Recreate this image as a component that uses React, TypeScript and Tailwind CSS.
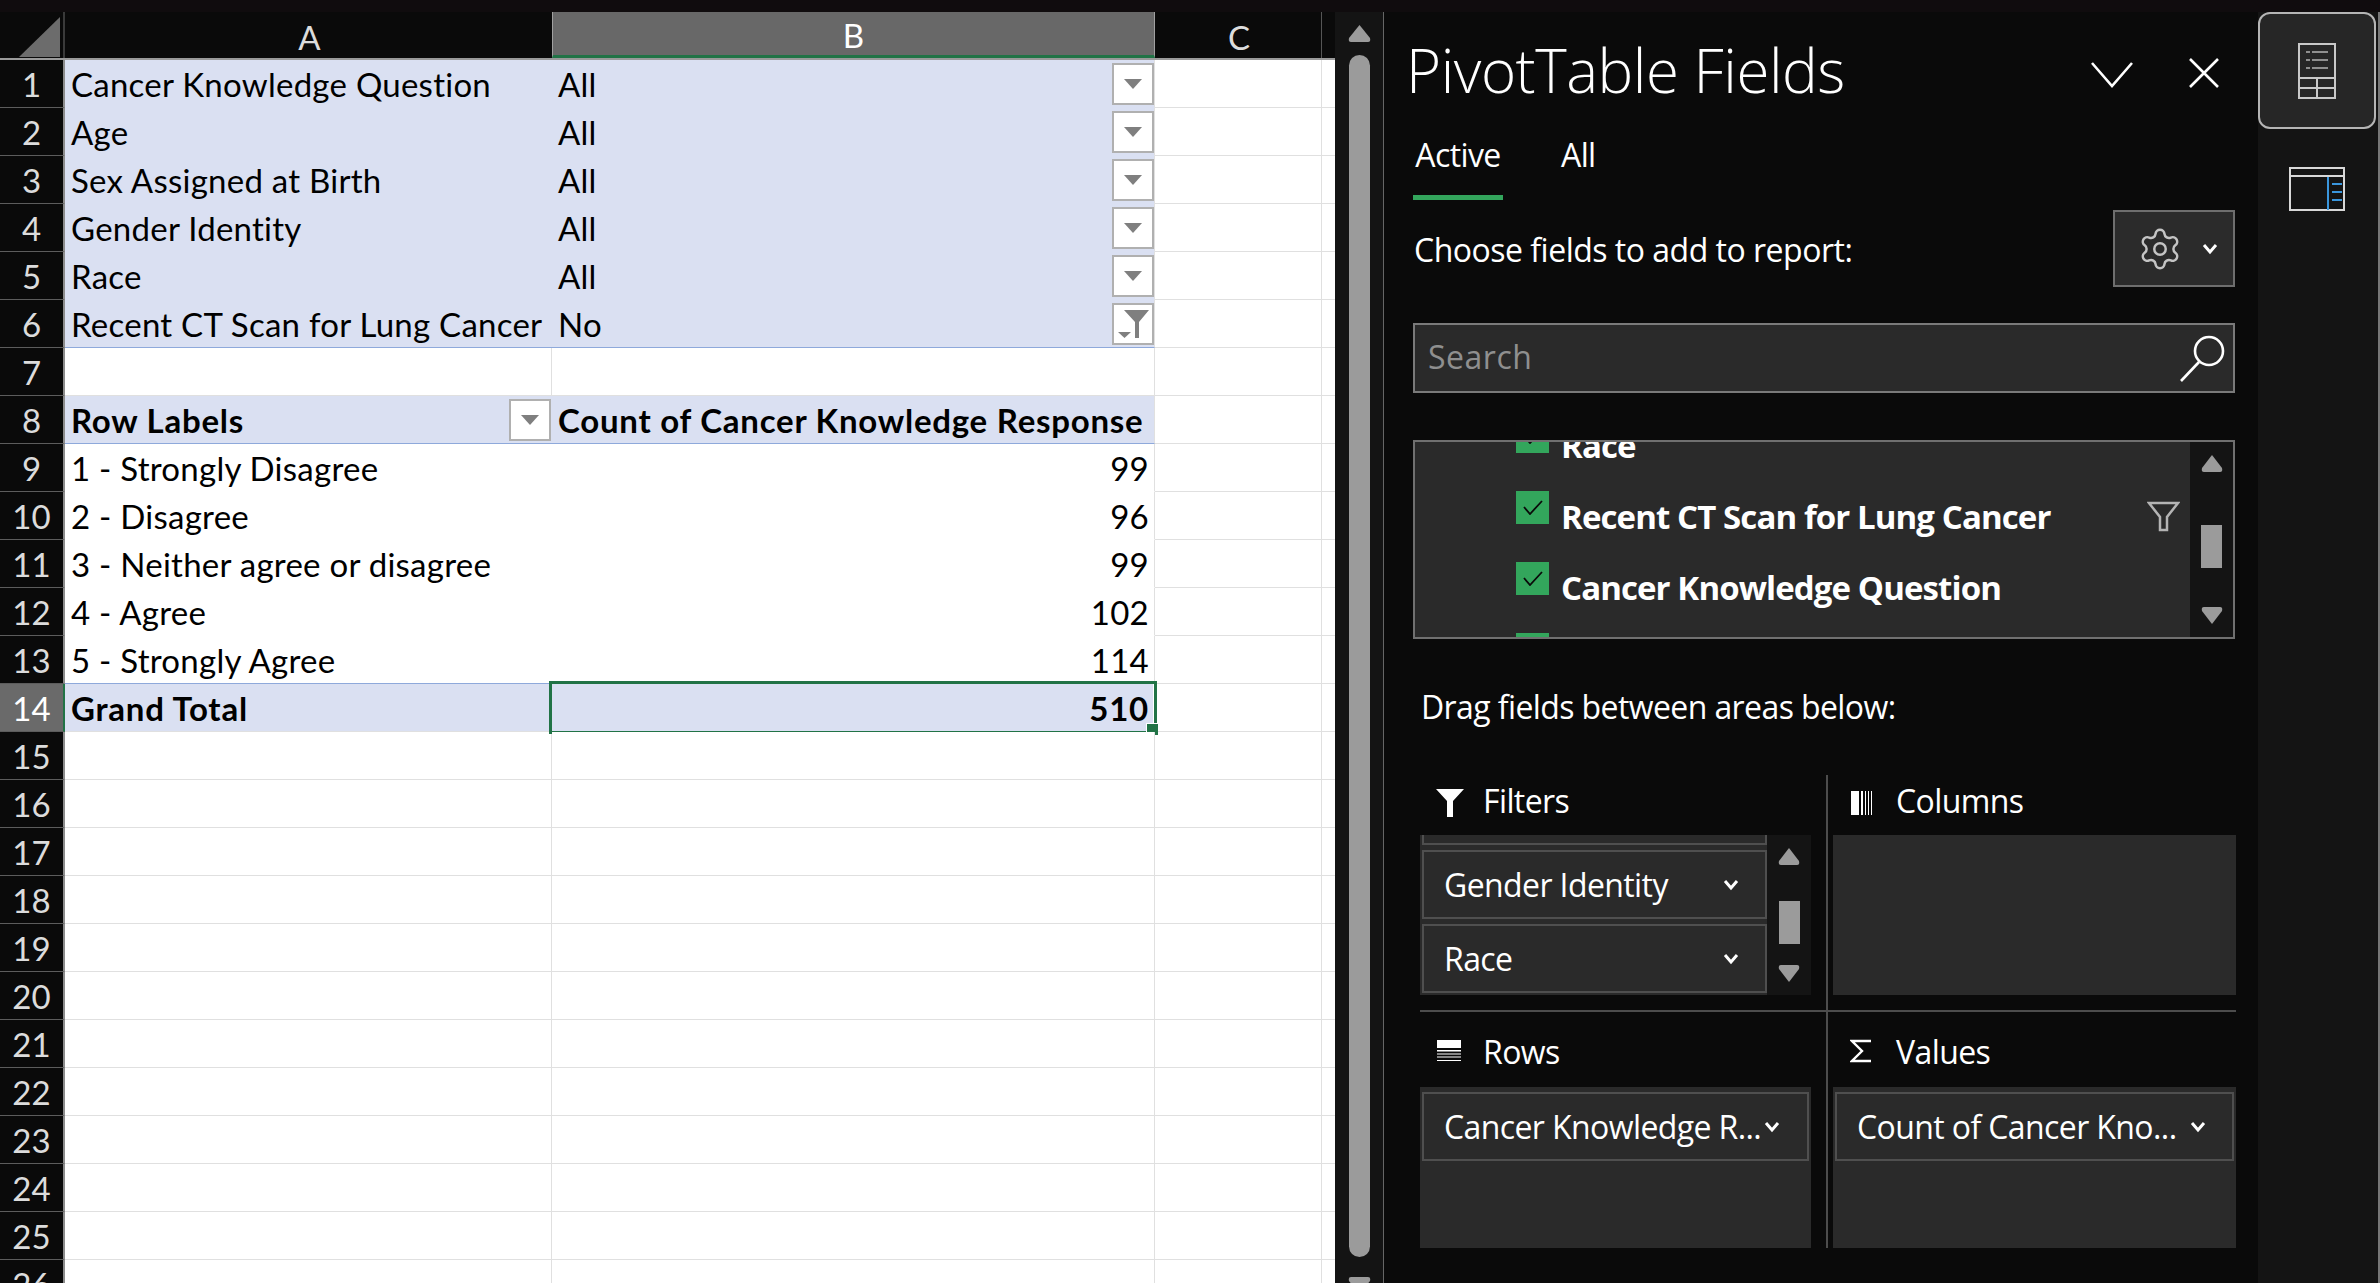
import type { ReactNode } from 'react'
import { Settings } from 'lucide-react'

const rows = [
  { n: 1, a: 'Cancer Knowledge Question', b: 'All', kind: 'filter' },
  { n: 2, a: 'Age', b: 'All', kind: 'filter' },
  { n: 3, a: 'Sex Assigned at Birth', b: 'All', kind: 'filter' },
  { n: 4, a: 'Gender Identity', b: 'All', kind: 'filter' },
  { n: 5, a: 'Race', b: 'All', kind: 'filter' },
  { n: 6, a: 'Recent CT Scan for Lung Cancer', b: 'No', kind: 'filterLast' },
  { n: 7, a: '', b: '', kind: 'blank' },
  { n: 8, a: 'Row Labels', b: 'Count of Cancer Knowledge Response', kind: 'head' },
  { n: 9, a: '1 - Strongly Disagree', b: '99', kind: 'item' },
  { n: 10, a: '2 - Disagree', b: '96', kind: 'item' },
  { n: 11, a: '3 - Neither agree or disagree', b: '99', kind: 'item' },
  { n: 12, a: '4 - Agree', b: '102', kind: 'item' },
  { n: 13, a: '5 - Strongly Agree', b: '114', kind: 'itemLast' },
  { n: 14, a: 'Grand Total', b: '510', kind: 'total' },
  ...Array.from({ length: 12 }, (_, i) => ({ n: i + 15, a: '', b: '', kind: 'empty' })),
]

function Arrow() {
  return (
    <svg width="18" height="10" viewBox="0 0 18 10">
      <path d="M0 0H18L9 10Z" fill="#7f7f7f" />
    </svg>
  )
}

function DropButton({ filtered }: { filtered?: boolean }) {
  return (
    <div className="flex h-[42px] w-[42px] shrink-0 items-center justify-center border-2 border-[#b0b0b0] bg-white">
      {filtered ? (
        <svg width="36" height="34" viewBox="0 0 36 34">
          <path d="M9 3H34L24 15V31H20V15Z" fill="#7f7f7f" />
          <path d="M3 25H16L9.5 31Z" fill="#7f7f7f" />
        </svg>
      ) : (
        <Arrow />
      )}
    </div>
  )
}

function SheetRow({ n, a, b, kind }: { n: number; a: string; b: string; kind: string }) {
  const isFilter = kind === 'filter' || kind === 'filterLast'
  const isBlue = isFilter || kind === 'head' || kind === 'total'
  const isBold = kind === 'head' || kind === 'total'
  const isNumber = kind === 'item' || kind === 'itemLast' || kind === 'total'
  const lineUnder =
    kind === 'filterLast' || kind === 'itemLast' || kind === 'head'
      ? 'border-b-[#8ea9db]'
      : kind === 'empty' || kind === 'blank' || kind === 'total'
        ? 'border-b-[#e0e0e0]'
        : isBlue
          ? 'border-b-[#dae0f2]'
          : 'border-b-white'
  const weight = isBold ? 'font-bold tracking-[0.75px]' : 'tracking-[0.25px]'

  return (
    <div className="flex h-12 shrink-0">
      <div
        className={`flex w-[65px] shrink-0 items-center justify-center border-r-2 border-b border-r-[#8c8c8c] border-b-[#5c5c5c] pt-[2px] text-[33px] ${
          n === 14 ? 'bg-[#6a6a6a] border-r-[#217346] text-white' : 'bg-[#0a0a0a] text-[#dcdcdc]'
        }`}
      >
        {n}
      </div>
      <div
        className={`flex w-[487px] shrink-0 items-center justify-between border-b pl-[6px] pr-[1px] text-[33px] text-black ${lineUnder} ${
          isBlue ? 'bg-[#dae0f2]' : 'bg-white'
        } ${weight} ${kind === 'blank' || kind === 'empty' ? 'border-r border-r-[#e0e0e0]' : ''}`}
      >
        <span className="whitespace-nowrap pt-[2px]">{a}</span>
        {kind === 'head' && <DropButton />}
      </div>
      <div
        className={`relative flex w-[603px] shrink-0 items-center border-b border-r border-r-[#e0e0e0] text-[33px] text-black ${lineUnder} ${
          isBlue ? 'bg-[#dae0f2]' : 'bg-white'
        } ${weight} ${isNumber ? 'justify-end pr-[5px]' : 'justify-between pl-[6px]'}`}
      >
        <span className="whitespace-nowrap pt-[2px]">{b}</span>
        {isFilter && <DropButton filtered={kind === 'filterLast'} />}
        {kind === 'total' && (
          <>
            <div className="absolute -top-[3px] -right-[3px] -bottom-[3px] -left-[3px] border-[3px] border-[#217346]" />
            <div className="absolute top-0 right-0 bottom-0 w-px bg-white" />
            <div className="absolute -right-[4px] -bottom-[4px] h-3 w-3 border-t border-l border-white bg-[#217346]" />
          </>
        )}
      </div>
      <div className="w-[167px] shrink-0 border-r border-b border-[#e0e0e0] bg-white" />
      <div className="w-[13px] shrink-0 border-b border-[#e0e0e0] bg-white" />
    </div>
  )
}

function ColHeader() {
  return (
    <div className="flex h-12 shrink-0 border-b-2 border-[#9a9a9a] bg-[#0a0a0a] text-[33px] text-[#dcdcdc]">
      <div className="flex w-[65px] shrink-0 items-center justify-end border-r-2 border-[#3a3a3a] pr-[2px] pt-[3px]">
        <svg width="42" height="40" viewBox="0 0 42 40">
          <path d="M0 40L41 0V40Z" fill="#6c6c6c" />
        </svg>
      </div>
      <div className="flex w-[487px] shrink-0 items-center justify-center pl-[2px] pt-[5px]">A</div>
      <div className="flex w-[603px] shrink-0 items-center justify-center border-x border-b-[3px] border-x-[#a0a0a0] border-b-[#217346] bg-[#686868] pt-[5px] text-white">
        B
      </div>
      <div className="flex w-[167px] shrink-0 items-center justify-center border-r border-[#555] pl-[2px] pt-[5px]">C</div>
    </div>
  )
}

function ScrollBar() {
  return (
    <div className="flex w-[49px] shrink-0 flex-col items-center border-r border-[#666] bg-[#141414] pt-[13px]">
      <svg className="shrink-0" width="23" height="17" viewBox="0 0 23 17">
        <path d="M11.5 0L22 13Q23 17 20 17H3Q0 17 1 13Z" fill="#9b9b9b" />
      </svg>
      <div className="mt-[13px] h-[1202px] w-[21px] shrink-0 rounded-full bg-[#9b9b9b]" />
      <svg className="mt-[20px] shrink-0" width="23" height="17" viewBox="0 0 23 17">
        <path d="M11.5 17L22 4Q23 0 20 0H3Q0 0 1 4Z" fill="#9b9b9b" />
      </svg>
    </div>
  )
}

function Chevron({ className }: { className?: string }) {
  return (
    <svg className={className} width="16" height="12" viewBox="0 0 16 12" fill="none">
      <path d="M2 2L8 9L14 2" stroke="#ffffff" strokeWidth="3" />
    </svg>
  )
}

function Check() {
  return (
    <div className="flex h-[33px] w-[33px] shrink-0 items-start justify-center bg-[#33a65c] pt-[9px]">
      <svg width="20" height="15" viewBox="0 0 20 15" fill="none">
        <path d="M1 7L7 14L19 1" stroke="#0a0a0a" strokeWidth="1.8" />
      </svg>
    </div>
  )
}

function FieldRow({ label, filter }: { label: string; filter?: boolean }) {
  return (
    <div className="flex h-[71px] shrink-0 pl-[101px]">
      <Check />
      <span className="ml-[12px] mt-[2px] whitespace-nowrap text-[33px] leading-[48px] font-bold tracking-[-0.9px] text-white">
        {label}
      </span>
      {filter && (
        <svg className="ml-auto mr-[10px] mt-[10px]" width="33" height="31" viewBox="0 0 33 31" fill="none">
          <path d="M2 2H31L20 16V29H13V16Z" stroke="#b4b4b4" strokeWidth="2.5" />
        </svg>
      )}
    </div>
  )
}

function MiniScroll({ up, thumbTop, thumbH, gap, w }: { up: number; thumbTop: number; thumbH: number; gap: number; w: string }) {
  return (
    <div className={`flex shrink-0 flex-col items-center bg-[#141414] ${w}`} style={{ paddingTop: up }}>
      <svg width="22" height="17" viewBox="0 0 22 17">
        <path d="M11 0L21 13Q22 17 19 17H3Q0 17 1 13Z" fill="#9b9b9b" />
      </svg>
      <div className="w-[21px] shrink-0 bg-[#9b9b9b]" style={{ marginTop: thumbTop, height: thumbH }} />
      <svg className="shrink-0" style={{ marginTop: gap }} width="22" height="17" viewBox="0 0 22 17">
        <path d="M11 17L21 4Q22 0 19 0H3Q0 0 1 4Z" fill="#9b9b9b" />
      </svg>
    </div>
  )
}

function AreaHead({ icon, label, className, iconClass, textClass }: { icon: ReactNode; label: string; className: string; iconClass: string; textClass: string }) {
  return (
    <div className={`flex ${className}`}>
      <div className={`flex w-[65px] shrink-0 items-center ${iconClass}`}>{icon}</div>
      <span className={`flex items-center text-[32px] tracking-[-0.6px] text-white ${textClass}`}>{label}</span>
    </div>
  )
}

function AreaItem({ label, pad }: { label: string; pad?: string }) {
  return (
    <div className={`flex h-[69px] shrink-0 items-center border-2 border-[#4f4f4f] bg-[#2a2a2a] pl-[20px] ${pad ?? 'justify-between pr-[26px]'}`}>
      <span className="whitespace-nowrap text-[32px] tracking-[-0.6px] text-white">{label}</span>
      <Chevron className="shrink-0" />
    </div>
  )
}

export default function App() {
  return (
    <div className="flex h-[1283px] w-[2380px] flex-col overflow-hidden bg-[#0a0a0a] font-['Lato',sans-serif]">
      <div className="h-3 shrink-0 bg-[#100c0e]" />
      <div className="flex min-h-0 flex-1">
        <div className="flex w-[1335px] shrink-0 flex-col overflow-hidden">
          <ColHeader />
          {rows.map((r) => (
            <SheetRow key={r.n} {...r} />
          ))}
        </div>
        <ScrollBar />

        <div className="flex w-[874px] shrink-0 flex-col pl-[29px] pr-[23px] font-['Open_Sans',sans-serif]">
          <div className="flex h-[116px] shrink-0 items-center">
            <span className="ml-[-7px] text-[60px] font-light tracking-[-0.45px] text-white">PivotTable Fields</span>
            <svg className="ml-auto mt-[10px] mr-[-2px]" width="42" height="26" viewBox="0 0 42 26" fill="none">
              <path d="M1 1L21 24L41 1" stroke="#ffffff" strokeWidth="2.6" />
            </svg>
            <svg className="ml-[57px] mr-[15px] mt-[6px]" width="32" height="32" viewBox="0 0 32 32" fill="none">
              <path d="M2 2L30 30M30 2L2 30" stroke="#ffffff" strokeWidth="2.6" />
            </svg>
          </div>

          <div className="flex h-[72px] shrink-0 text-[32px] tracking-[-0.6px] text-white">
            <div className="flex w-[90px] flex-col">
              <span className="flex h-[54px] items-center justify-center">Active</span>
              <div className="mt-[13px] h-[5px] bg-[#33a65c]" />
            </div>
            <span className="ml-[58px] flex h-[54px] items-center">All</span>
          </div>

          <div className="mt-[10px] flex h-[77px] shrink-0 items-center justify-between">
            <span className="ml-px pt-[2px] text-[32px] tracking-[-0.5px] text-white">Choose fields to add to report:</span>
            <div className="flex h-[77px] w-[122px] items-center border-2 border-[#6e6e6e] bg-[#2b2b2b] pl-[22px]">
              <Settings size={46} strokeWidth={1.3} color="#c4c4c4" />
              <Chevron className="ml-[19px]" />
            </div>
          </div>

          <div className="mt-[36px] flex h-[70px] shrink-0 items-center justify-between border-2 border-[#7a7a7a] bg-[#2a2a2a] pl-[13px] pr-[7px]">
            <span className="mt-[-3px] text-[32px] tracking-[0.5px] text-[#8f8f8f]">Search</span>
            <svg width="48" height="48" viewBox="0 0 48 48" fill="none">
              <circle cx="31" cy="17" r="14" stroke="#ffffff" strokeWidth="2.6" />
              <path d="M21 28L3 47" stroke="#ffffff" strokeWidth="2.6" />
            </svg>
          </div>

          <div className="mt-[47px] flex h-[199px] shrink-0 overflow-hidden border-2 border-[#707070] bg-[#2a2a2a]">
            <div className="flex min-w-0 flex-1 flex-col overflow-hidden">
              <div className="mt-[-22px]" />
              <FieldRow label="Race" />
              <FieldRow label="Recent CT Scan for Lung Cancer" filter />
              <FieldRow label="Cancer Knowledge Question" />
              <div className="ml-[101px] h-[33px] w-[33px] shrink-0 bg-[#33a65c]" />
            </div>
            <MiniScroll up={13} thumbTop={53} thumbH={43} gap={39} w="w-[43px]" />
          </div>

          <div className="flex h-[136px] shrink-0 items-start pl-[8px] pt-[46px]">
            <span className="text-[32px] leading-[44px] tracking-[-0.6px] text-white">Drag fields between areas below:</span>
          </div>

          <div className="ml-[7px] mr-[-1px] grid h-[473px] shrink-0 grid-cols-[408px_1fr]">
            <div className="flex h-[237px] w-[408px] flex-col border-r-2 border-b-2 border-[#4d4d4d]">
              <AreaHead
                className="h-[60px]"
                iconClass="pl-[16px] pb-[4px]"
                textClass="ml-[-2px] pb-[8px]"
                label="Filters"
                icon={
                  <svg width="28" height="28" viewBox="0 0 28 28">
                    <path d="M0 0H28L17 12V28H11V12Z" fill="#ffffff" />
                  </svg>
                }
              />
              <div className="flex h-[160px] w-[391px]">
                <div className="flex w-[347px] shrink-0 flex-col gap-[5px] overflow-hidden bg-[#2a2a2a] pl-[2px]">
                  <div className="mt-[-59px]">
                    <AreaItem label="" />
                  </div>
                  <AreaItem label="Gender Identity" />
                  <AreaItem label="Race" />
                </div>
                <MiniScroll up={13} thumbTop={36} thumbH={43} gap={21} w="flex-1" />
              </div>
            </div>
            <div className="flex h-[237px] flex-col border-b-2 border-[#4d4d4d] pl-[5px]">
              <AreaHead
                className="ml-[-6px] h-[60px]"
                iconClass="pl-[24px] pb-[4px]"
                textClass="ml-[4px] pb-[8px]"
                label="Columns"
                icon={
                  <svg width="22" height="24" viewBox="0 0 22 24">
                    <path
                      d="M0 0H8V24H0ZM10 0H12V24H10ZM14 0H15V24H14ZM17 0H18V24H17ZM20 0H21V24H20Z"
                      fill="#ffffff"
                    />
                  </svg>
                }
              />
              <div className="h-[160px] bg-[#2a2a2a]" />
            </div>
            <div className="flex h-[236px] w-[408px] flex-col border-r-2 border-[#4d4d4d]">
              <AreaHead
                className="h-[75px]"
                iconClass="pl-[17px] pt-[2px]"
                textClass="ml-[-2px] pt-[4px]"
                label="Rows"
                icon={
                  <svg width="24" height="22" viewBox="0 0 24 22">
                    <path d="M0 0H24V8H0ZM0 10H24V11.5H0ZM0 13.5H24V14.5H0ZM0 16.5H24V17.5H0ZM0 20H24V21H0Z" fill="#ffffff" />
                  </svg>
                }
              />
              <div className="flex h-[161px] w-[391px] flex-col bg-[#2a2a2a] px-[2px] pt-[5px]">
                <AreaItem label="Cancer Knowledge R..." pad="gap-[3px]" />
              </div>
            </div>
            <div className="flex h-[236px] flex-col pl-[5px]">
              <AreaHead
                className="ml-[-6px] h-[75px]"
                iconClass="pl-[23px] pt-[2px]"
                textClass="ml-[4px] pt-[4px]"
                label="Values"
                icon={
                  <svg width="22" height="24" viewBox="0 0 22 24" fill="none">
                    <path d="M21 2H2L12 12L2 22H21" stroke="#ffffff" strokeWidth="2.4" />
                  </svg>
                }
              />
              <div className="flex h-[161px] flex-col bg-[#2a2a2a] px-[2px] pt-[5px]">
                <AreaItem label="Count of Cancer Kno..." pad="justify-between pr-[26px]" />
              </div>
            </div>
          </div>
        </div>

        <div className="flex w-[122px] shrink-0 flex-col border-r-2 border-[#777] bg-[#141414]">
          <div className="flex h-[117px] w-[118px] shrink-0 items-center justify-center rounded-[12px] border-2 border-[#b5b5b5] bg-[#262626]">
            <svg width="38" height="56" viewBox="0 0 38 56" fill="none">
              <path d="M1 1H37V55H1ZM1 35H37M1 45H37M19 35V55" stroke="#c8c8c8" strokeWidth="2" />
              <path d="M8 9H12M14 9H30M8 17H12M14 17H30M8 25H12M14 25H30" stroke="#8f8f8f" strokeWidth="2" />
            </svg>
          </div>
          <div className="ml-[31px] mt-[38px]">
            <svg width="56" height="44" viewBox="0 0 56 44" fill="none">
              <path d="M1 1H55V43H1ZM1 9H55" stroke="#d8d8d8" strokeWidth="2" />
              <path d="M39 10V43" stroke="#3a96dd" strokeWidth="2" />
              <path d="M43 17H53M43 25H53M43 33H53" stroke="#3a96dd" strokeWidth="2" />
            </svg>
          </div>
        </div>
      </div>
    </div>
  )
}
